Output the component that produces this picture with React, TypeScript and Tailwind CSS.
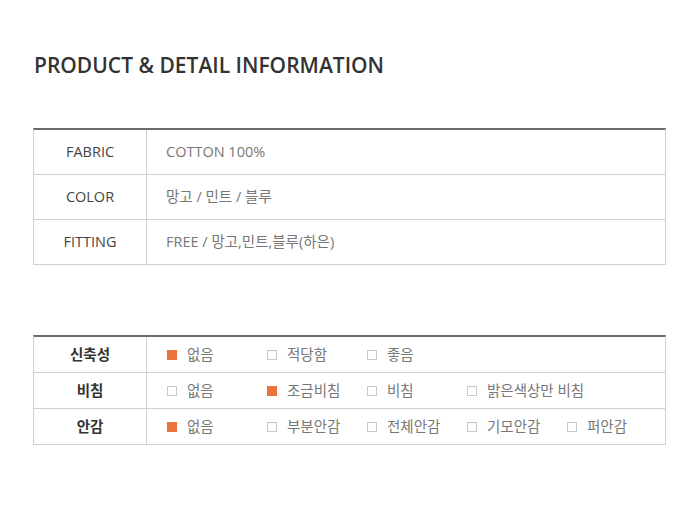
const font = { fontFamily: '"Open Sans", "Noto Sans CJK KR", sans-serif' };

const specs = [
  { label: "FABRIC", value: "COTTON 100%" },
  { label: "COLOR", value: "망고 / 민트 / 블루" },
  { label: "FITTING", value: "FREE / 망고,민트,블루(하은)" },
];

const checks = [
  { label: "신축성", options: ["없음", "적당함", "좋음"], on: 0 },
  { label: "비침", options: ["없음", "조금비침", "비침", "밝은색상만 비침"], on: 1 },
  { label: "안감", options: ["없음", "부분안감", "전체안감", "기모안감", "퍼안감"], on: 0 },
];

function Box({ on }: { on: boolean }) {
  return on ? (
    <span className="w-[10px] h-[10px] bg-[#e8743b] shrink-0" />
  ) : (
    <span className="w-[10px] h-[10px] border border-[#c8c8c8] bg-white shrink-0" />
  );
}

export default function App() {
  return (
    <div className="w-[700px] h-[525px] bg-white pl-[33px] pt-[52px]" style={font}>
      <h1 className="text-[21px] font-semibold text-[#333] leading-[26px] pl-px">
        PRODUCT &amp; DETAIL INFORMATION
      </h1>

      {/* spec table */}
      <div className="mt-[50px] w-[633px] border-t-2 border-t-[#6b6b6b] border-x border-b border-x-[#d0d0d0] border-b-[#d0d0d0]">
        {specs.map((s, i) => (
          <div
            key={s.label}
            className={`grid grid-cols-[113px_1fr] ${i > 0 ? "h-[45px] border-t border-[#d0d0d0]" : "h-[44px]"}`}
          >
            <div className="flex items-center justify-center border-r border-[#d0d0d0] text-[14.5px] text-[#444]">
              {s.label}
            </div>
            <div className="flex items-center pl-[19px] text-[14.5px] text-[#777]">{s.value}</div>
          </div>
        ))}
      </div>

      {/* check table */}
      <div className="mt-[70px] w-[633px] border-t-2 border-t-[#6b6b6b] border-x border-b border-x-[#d0d0d0] border-b-[#d0d0d0]">
        {checks.map((c, i) => (
          <div
            key={c.label}
            className={`grid grid-cols-[113px_1fr] ${i > 0 ? "h-[36px] border-t border-[#d0d0d0]" : "h-[35px]"}`}
          >
            <div className="flex items-center justify-center border-r border-[#d0d0d0] text-[14.5px] font-bold text-[#333]">
              {c.label}
            </div>
            <div className="flex items-center pl-[20px]">
              {c.options.map((o, j) => (
                <div key={o} className="w-[100px] flex items-center gap-[10px] text-[14.5px] text-[#777] whitespace-nowrap">
                  <Box on={j === c.on} />
                  <span>{o}</span>
                </div>
              ))}
            </div>
          </div>
        ))}
      </div>
    </div>
  );
}
